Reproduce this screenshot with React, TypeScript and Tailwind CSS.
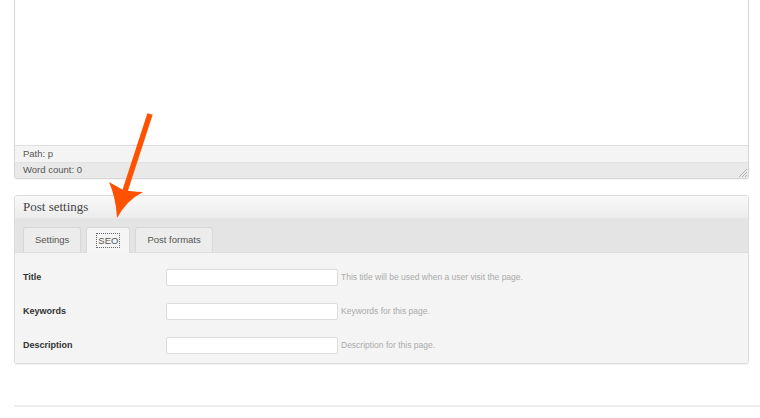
import React from 'react';

const rows = [
  { label: 'Title', hint: 'This title will be used when a user visit the page.' },
  { label: 'Keywords', hint: 'Keywords for this page.' },
  { label: 'Description', hint: 'Description for this page.' },
];

export default function App() {
  return (
    <div className="relative w-[760px] h-[418px] overflow-hidden bg-white font-['Liberation_Sans',Arial,sans-serif]">
      {/* editor */}
      <div className="ml-[14px] w-[735px] border-x border-b border-[#d6d6d6] rounded-b-[3px] shadow-[0_1px_1px_rgba(0,0,0,0.04)]">
        <div className="h-[145px] bg-white" />
        <div className="h-[17px] border-t border-[#dfdfdf] bg-[#f4f4f4] px-[8px] flex items-center text-[9.5px] text-[#555]">
          Path: p
        </div>
        <div className="relative h-[16px] border-t border-[#e2e2e2] bg-[#e9e9e9] px-[8px] flex items-center text-[9.5px] text-[#555]">
          Word count: 0
          <svg className="absolute right-[1px] bottom-[1px]" width="9" height="9" viewBox="0 0 9 9">
            <path d="M1 9L9 1M4 9L9 4M7 9L9 7" stroke="#b5b5b5" strokeWidth="1" />
          </svg>
        </div>
      </div>

      {/* post settings */}
      <div className="mt-[16px] ml-[14px] w-[735px] border border-[#dcdcdc] rounded-[3px] shadow-[0_1px_1px_rgba(0,0,0,0.05)] overflow-hidden">
        <div className="h-[23px] bg-gradient-to-b from-[#f9f9f9] to-[#ececec] border-b border-[#e5e5e5] px-[8px] flex items-center font-['Liberation_Serif',Georgia,serif] text-[13px] text-[#444]">
          Post settings
        </div>
        <div className="h-[34px] bg-[#e4e4e4] border-b border-[#dcdcdc] px-[8px] flex items-end gap-[5px]">
          <div className="h-[25px] px-[11px] flex items-center border border-b-0 border-[#d8d8d8] rounded-t-[3px] bg-[#ececec] text-[9.5px] text-[#555]">
            Settings
          </div>
          <div className="h-[26px] -mb-px px-[10px] flex items-center border border-b-0 border-[#d8d8d8] rounded-t-[3px] bg-[#f5f5f5] text-[9.5px] text-[#555]">
            <span className="px-px leading-[13px] outline outline-1 outline-dotted outline-[#666]">SEO</span>
          </div>
          <div className="h-[25px] px-[11px] flex items-center border border-b-0 border-[#d8d8d8] rounded-t-[3px] bg-[#ececec] text-[9.5px] text-[#555]">
            Post formats
          </div>
        </div>
        <div className="bg-[#f4f4f4] pt-[16px] pb-[9px] px-[8px] flex flex-col gap-[17px]">
          {rows.map((r) => (
            <div key={r.label} className="flex items-center h-[17px]">
              <div className="w-[143px] text-[9px] font-bold text-[#333]">{r.label}</div>
              <div className="w-[172px] h-[17px] bg-white border border-[#dcdcdc] rounded-[2px]" />
              <div className="ml-[3px] text-[8.5px] text-[#aaa]">{r.hint}</div>
            </div>
          ))}
        </div>
      </div>

      <div className="mt-[41px] ml-[14px] h-[2px] bg-[#eeeeee]" />

      {/* arrow overlay */}
      <svg className="absolute left-0 top-0 pointer-events-none" width="760" height="418" viewBox="0 0 760 418">
        <line x1="150" y1="114" x2="124" y2="194" stroke="#ff5200" strokeWidth="5.5" />
        <path
          d="M109 182 Q118 187 123 190 L130 191 Q137 192 143 192 Q127 200 117 218 Q116 198 109 182 Z"
          fill="#ff5200"
        />
      </svg>
    </div>
  );
}
